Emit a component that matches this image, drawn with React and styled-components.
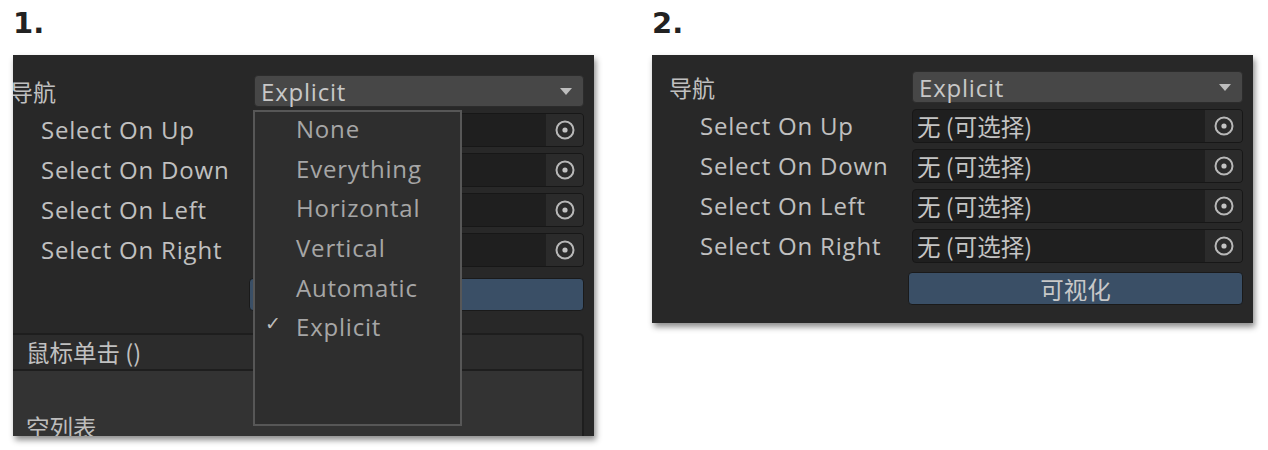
import React from "react";
import styled, { createGlobalStyle } from "styled-components";

const Global = createGlobalStyle`
  html, body { margin: 0; padding: 0; background: #ffffff; }
  body { font-family: "Open Sans", "Noto Sans CJK SC", sans-serif; }
`;

const Page = styled.div`
  display: flex;
  align-items: flex-start;
  width: 1268px;
  height: 450px;
  overflow: hidden;
`;

const Section = styled.div`
  display: flex;
  flex-direction: column;
  margin-left: ${(p) => p.$left}px;
  width: ${(p) => p.$width}px;
`;

const Title = styled.div`
  font-family: "DejaVu Sans", sans-serif;
  font-weight: bold;
  font-size: 29px;
  line-height: 40px;
  padding-top: 3px;
  margin-bottom: 12px;
  color: #222;
`;

const Panel = styled.div`
  position: relative;
  box-sizing: border-box;
  height: ${(p) => p.$height}px;
  background: #282828;
  padding: ${(p) => p.$padTop}px 10px 0 ${(p) => p.$padLeft}px;
  box-shadow: 2px 4px 6px rgba(0, 0, 0, 0.45);
  overflow: hidden;
  font-family: "Open Sans", "Noto Sans CJK SC", sans-serif;
  font-size: 24px;
  letter-spacing: 0.8px;
  color: #c0c0c0;
`;

const Grid = styled.div`
  display: grid;
  grid-template-columns: ${(p) => p.$label}px 1fr;
  row-gap: 6px;
  align-items: center;
`;

const Label = styled.div`
  padding-left: ${(p) => p.$indent}px;
  margin-left: ${(p) => (p.$clip ? -2 : 0)}px;
  white-space: nowrap;
  line-height: 30px;
`;

const CjkLabel = styled.div`
  margin-left: ${(p) => (p.$clip ? -3 : 0)}px;
  white-space: nowrap;
  line-height: 30px;
  font-family: "Noto Sans CJK SC", sans-serif;
  font-size: 23px;
  letter-spacing: 0;
`;

const Dropdown = styled.div`
  box-sizing: border-box;
  height: 32px;
  display: flex;
  align-items: center;
  justify-content: space-between;
  padding: 0 11px 0 6px;
  background: #474747;
  border: 1px solid #2c2c2c;
  border-radius: 4px;
  color: #c8c8c8;
`;

const Arrow = styled.span`
  width: 0;
  height: 0;
  border-left: 6px solid transparent;
  border-right: 6px solid transparent;
  border-top: 7px solid #bdbdbd;
`;

const ObjectField = styled.div`
  box-sizing: border-box;
  height: 34px;
  display: flex;
  align-items: stretch;
  background: #1f1f1f;
  border: 1px solid #171717;
  border-radius: 4px;
  overflow: hidden;
`;

const FieldText = styled.div`
  flex: 1;
  display: flex;
  align-items: center;
  padding-left: 4px;
  font-family: "Noto Sans CJK SC", sans-serif;
  font-size: 23.5px;
  letter-spacing: 0;
  color: #c4c4c4;
  white-space: nowrap;
`;

const PickButton = styled.div`
  width: 37px;
  display: flex;
  align-items: center;
  justify-content: center;
  background: #2b2b2b;
`;

const VisualizeButton = styled.div`
  grid-column: 2;
  box-sizing: border-box;
  height: 33px;
  margin-top: ${(p) => p.$top}px;
  margin-left: ${(p) => p.$shift}px;
  display: flex;
  align-items: center;
  justify-content: center;
  background: #3a4f66;
  border: 1px solid #1a1a1a;
  border-radius: 4px;
  font-family: "Noto Sans CJK SC", sans-serif;
  font-size: 23.5px;
  letter-spacing: 0;
  color: #c8c8c8;
`;

const EventHeader = styled.div`
  box-sizing: border-box;
  margin-top: 22px;
  margin-left: -2px;
  height: 38px;
  display: flex;
  align-items: center;
  padding-left: 15px;
  background: #2c2c2c;
  border-top: 2px solid #1e1e1e;
  border-bottom: 2px solid #1e1e1e;
  border-right: 2px solid #1e1e1e;
  border-top-right-radius: 5px;
  font-family: "Noto Sans CJK SC", sans-serif;
  font-size: 23.5px;
  letter-spacing: 0;
  color: #c0c0c0;
`;

const EventBody = styled.div`
  box-sizing: border-box;
  margin-left: -2px;
  height: 80px;
  padding: 39px 0 0 15px;
  background: #333333;
  border-right: 2px solid #1e1e1e;
  font-family: "Noto Sans CJK SC", sans-serif;
  font-size: 23.5px;
  letter-spacing: 0;
  color: #bdbdbd;
`;

const Menu = styled.div`
  position: absolute;
  left: 240px;
  top: 55px;
  box-sizing: border-box;
  width: 209px;
  height: 316px;
  background: #2e2e2e;
  border: 2px solid #575757;
  display: flex;
  flex-direction: column;
`;

const MenuItem = styled.div`
  position: relative;
  box-sizing: border-box;
  height: 39.6px;
  display: flex;
  align-items: center;
  padding: 0 0 6px 41px;
  color: #a6a6a6;
`;

const Check = styled.span`
  position: absolute;
  left: 10px;
  top: 2px;
  font-family: "DejaVu Sans", sans-serif;
  font-size: 19px;
  font-weight: bold;
  color: #bdbdbd;
`;

const Target = () => (
  <svg width="22" height="22" viewBox="0 0 22 22">
    <circle cx="11" cy="11" r="8.5" fill="none" stroke="#b8b8b8" strokeWidth="2" />
    <circle cx="11" cy="11" r="2.6" fill="#c4c4c4" />
  </svg>
);

const dirs = ["Select On Up", "Select On Down", "Select On Left", "Select On Right"];
const menuItems = ["None", "Everything", "Horizontal", "Vertical", "Automatic", "Explicit"];

function Inspector({ first }) {
  return (
    <Grid $label={first ? 241 : 243}>
      <CjkLabel $clip={first}>导航</CjkLabel>
      <Dropdown>
        <span>Explicit</span>
        <Arrow />
      </Dropdown>
      {dirs.map((d) => (
        <React.Fragment key={d}>
          <Label $indent={first ? 28 : 31}>{d}</Label>
          <ObjectField>
            <FieldText>{first ? "" : "无 (可选择)"}</FieldText>
            <PickButton>
              <Target />
            </PickButton>
          </ObjectField>
        </React.Fragment>
      ))}
      <VisualizeButton $shift={first ? -5 : -4} $top={first ? 5 : 3}>
        {first ? "" : "可视化"}
      </VisualizeButton>
    </Grid>
  );
}

export default function App() {
  return (
    <Page>
      <Global />
      <Section $left={13} $width={581}>
        <Title>1.</Title>
        <Panel $height={381} $padTop={20} $padLeft={0}>
          <Inspector first />
          <EventHeader>鼠标单击 ()</EventHeader>
          <EventBody>空列表</EventBody>
          <Menu>
            {menuItems.map((m) => (
              <MenuItem key={m}>
                {m === "Explicit" && <Check>✓</Check>}
                {m}
              </MenuItem>
            ))}
          </Menu>
        </Panel>
      </Section>
      <Section $left={58} $width={601}>
        <Title>2.</Title>
        <Panel $height={268} $padTop={16} $padLeft={17}>
          <Inspector />
        </Panel>
      </Section>
    </Page>
  );
}
